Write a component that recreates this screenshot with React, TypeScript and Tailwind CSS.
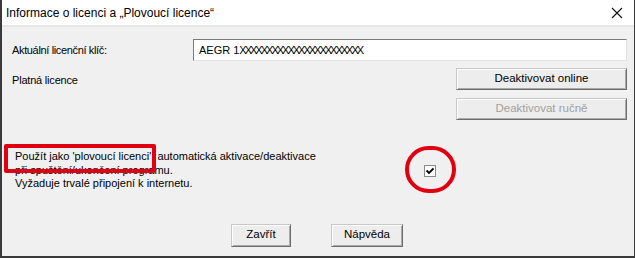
import React from "react";

function Btn({ children, disabled, className }: { children: React.ReactNode; disabled?: boolean; className?: string }) {
  return (
    <div
      className={
        "flex items-center justify-center bg-[#ededed] border border-t-[#c8c8c8] border-l-[#c8c8c8] border-r-[#6e6e6e] border-b-[#6e6e6e] shadow-[inset_1px_1px_0_#ffffff,inset_-1px_-1px_0_#a9a9a9] text-[11.5px] " +
        (disabled ? "text-[#a0a0a0] " : "text-black ") +
        (className || "")
      }
    >
      {children}
    </div>
  );
}

export default function App() {
  return (
    <div
      className="relative w-[635px] h-[258px] bg-[#f0f0f0] border-l-2 border-r border-b-2 border-[#3a3a3a] flex flex-col overflow-hidden"
      style={{ fontFamily: '"Liberation Sans", Arial, sans-serif' }}
    >
      {/* Title bar */}
      <div className="h-[25px] bg-white flex items-center justify-between pl-[4px] pr-[10px] shrink-0">
        <span className="text-[12px] text-black leading-none">Informace o licenci a „Plovoucí licence“</span>
        <svg width="12" height="12" viewBox="0 0 12 12" className="mr-[1px]">
          <path d="M1 1 L11 11 M11 1 L1 11" stroke="#111" strokeWidth="1.1" />
        </svg>
      </div>
      <div className="h-[2px] bg-[#e6e6e6] shrink-0" />

      {/* Content */}
      <div className="flex flex-col pl-[10px] pr-[7px] pt-[12px] text-[11px] text-black">
        <div className="flex items-center h-[22px]">
          <span className="w-[181px] tracking-[-0.35px]">Aktuální licenční klíč:</span>
          <div className="flex-1 h-[22px] bg-white border border-t-[#7a7a7a] border-l-[#7a7a7a] border-r-[#e3e3e3] border-b-[#e3e3e3] flex items-center pl-[5px] text-[11px]">
            <span>AEGR 1</span>
            <span className="tracking-[-2px]">XXXXXXXXXXXXXXXXXXXXXXX</span>
          </div>
        </div>
        <div className="flex items-center justify-between mt-[7px]">
          <span className="mt-[3px] tracking-[-0.2px]">Platná licence</span>
          <Btn className="w-[171px] h-[22px]">Deaktivovat online</Btn>
        </div>
        <div className="flex justify-end mt-[8px]">
          <Btn disabled className="w-[171px] h-[22px]">Deaktivovat ručně</Btn>
        </div>
        <div className="flex items-center mt-[30px]">
          <div className="flex flex-col pl-[3px] leading-[13.5px] text-[11px] w-[412px]">
            <span>Použít jako 'plovoucí licenci': automatická aktivace/deaktivace</span>
            <span>při spuštění/ukončení programu.</span>
            <span>Vyžaduje trvalé připojení k internetu.</span>
          </div>
          <div className="w-[12px] h-[12px] bg-white border border-[#8a8a8a] flex items-center justify-center mt-[1px]">
            <svg width="8" height="8" viewBox="0 0 8 8">
              <path d="M0.5 3.5 L3 6 L7.5 1.5" stroke="#000" strokeWidth="1.8" fill="none" />
            </svg>
          </div>
        </div>
        <div className="flex items-center mt-[33px] pl-[219px] gap-[40px]">
          <Btn className="w-[60px] h-[23px]">Zavřít</Btn>
          <Btn className="w-[72px] h-[23px]">Nápvěda</Btn>
        </div>
      </div>

      {/* Annotations */}
      <div className="absolute left-[2px] top-[144px] w-[152px] h-[29px] border-[4px] border-[#e0000f] rounded-[2px]" />
      <div className="absolute left-[403px] top-[146px] w-[51px] h-[47px] border-[4px] border-[#e0000f] rounded-full" />
    </div>
  );
}
